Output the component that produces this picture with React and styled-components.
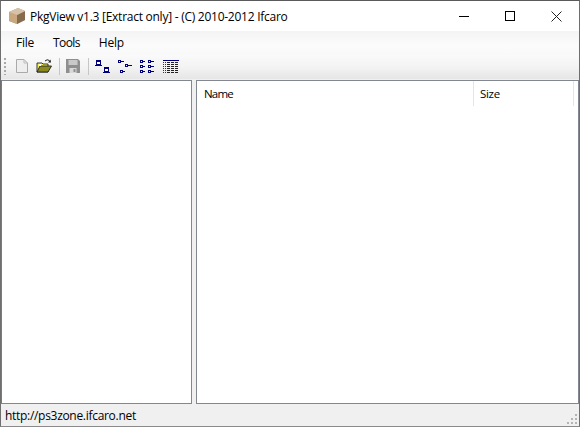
import React from "react";
import styled, { createGlobalStyle } from "styled-components";

const Global = createGlobalStyle`
  html, body { margin: 0; padding: 0; background: #f0f0f0; }
  #root { width: 580px; height: 427px; overflow: hidden; }
`;
const Win = styled.div`
  box-sizing: border-box; width: 580px; height: 427px; display: flex; flex-direction: column;
  border: 1px solid #6f6f6f; border-top-color: #5a5a5a; border-bottom-color: #8a8a8a;
  font-family: "Open Sans", "Noto Sans", sans-serif; font-size: 12px; color: #000; background: #f0f0f0;
`;
const TitleBar = styled.div`
  height: 30px; flex: none; display: flex; align-items: center; background: #fff; padding-left: 8px;
`;
const AppIcon = styled.svg`width: 17px; height: 17px; flex: none; margin-right: 4px;`;
const TitleText = styled.div`font-size: 12px; letter-spacing: -0.0215em; white-space: nowrap; flex: 1;`;
const WinBtn = styled.div`
  width: 46px; height: 30px; display: flex; align-items: center; justify-content: center;
`;
const MenuBar = styled.div`
  height: 24px; flex: none; display: flex; align-items: center; padding: 0 0 2px 15px; box-sizing: border-box; gap: 19px;
  background: linear-gradient(#f4f4f4, #fbfbfb 60%, #f9f9f9);
`;
const MenuItem = styled.div`font-size: 12px; letter-spacing: ${p => p.$track ?? -0.24}px;`;
const ToolBar = styled.div`
  box-sizing: border-box; height: 24px; flex: none; display: flex; align-items: center; padding: 0 0 2px 3px;
  background: linear-gradient(#fafafa, #f3f3f3 50%, #e6e6e6);
`;
const Grip = styled.div`
  width: 2px; height: 17px; margin-right: 8px; flex: none;
  background: repeating-linear-gradient(#a8a8a8 0 2px, transparent 2px 4px);
`;
const Tool = styled.svg`width: 16px; height: 16px; flex: none; margin-right: ${p => p.$gap ?? 7}px;`;
const Sep = styled.div`width: 1px; height: 17px; background: #c6c6c6; flex: none; margin-right: ${p => p.$gap ?? 6}px;`;
const Body = styled.div`
  flex: 1; min-height: 0; display: flex; gap: 4px; background: #f0f0f0; border-top: 1px solid #f0f0f0;
`;
const Tree = styled.div`
  box-sizing: border-box; width: 191px; flex: none; background: #fff; border: 1px solid #828790; border-left-color: #7a7a7a;
`;
const List = styled.div`
  box-sizing: border-box; flex: 1; background: #fff; border: 1px solid #828790;
`;
const Header = styled.div`height: 25px; display: flex; background: #fff;`;
const Col = styled.div`
  box-sizing: border-box; width: ${p => p.$w}px; height: 25px; display: flex; align-items: center; padding-left: ${p => p.$pad}px;
  padding-bottom: 1px; font-size: 11.5px; letter-spacing: ${p => p.$track}px; border-right: 1px solid #e5e5e5;
`;
const Status = styled.div`
  height: 22px; flex: none; display: flex; align-items: center; justify-content: space-between;
  padding-left: 4px; background: #f0f0f0; font-size: 12px; letter-spacing: -0.3px;
`;
const Resize = styled.svg`width: 12px; height: 12px; align-self: flex-end; margin-right: 1px; margin-bottom: 1px;`;

const Blue = "#00007b";
const Doc = ({ x, y }) => (
  <g>
    <rect x={x} y={y} width="5" height="5" fill={Blue} />
    <rect x={x + 1} y={y + 2} width="3" height="2" fill="#fff" />
  </g>
);
const Bit = ({ x, y }) => (
  <g>
    <rect x={x} y={y} width="3" height="3" fill={Blue} />
    <rect x={x + 1} y={y + 1} width="1" height="1" fill="#fff" />
  </g>
);
const Dash = ({ x, y, w = 2 }) => <rect x={x} y={y} width={w} height="1" fill={Blue} />;
const gridRows = [4, 6, 8, 10, 12, 14];

export default function App() {
  return (
    <Win>
      <Global />
      <TitleBar>
        <AppIcon viewBox="0 0 17 17">
          <path d="M0 4 L9 0 L16 3 L16 12 L8 16 L0 13 Z" fill="#b59a78" />
          <path d="M0 4 L8 7 L8 16 L0 13 Z" fill="#c9a87f" />
          <path d="M8 7 L16 3 L16 12 L8 16 Z" fill="#866b4e" />
          <path d="M0 4 L9 0 L16 3 L8 7 Z" fill="#d6c2a8" />
        </AppIcon>
        <TitleText>PkgView v1.3 [Extract only] - (C) 2010-2012 Ifcaro</TitleText>
        <WinBtn>
          <svg width="10" height="10" viewBox="0 0 10 10"><rect y="5" width="10" height="1" fill="#000" /></svg>
        </WinBtn>
        <WinBtn>
          <svg width="10" height="10" viewBox="0 0 10 10"><rect x=".5" y=".5" width="9" height="9" fill="none" stroke="#000" /></svg>
        </WinBtn>
        <WinBtn>
          <svg width="11" height="11" viewBox="0 0 11 11"><path d="M.5 .5 L10.5 10.5 M10.5 .5 L.5 10.5" stroke="#222" fill="none" /></svg>
        </WinBtn>
      </TitleBar>
      <MenuBar>
        <MenuItem>File</MenuItem>
        <MenuItem $track={-0.6}>Tools</MenuItem>
        <MenuItem>Help</MenuItem>
      </MenuBar>
      <ToolBar>
        <Grip />
        <Tool viewBox="0 0 16 16" $gap={6}>
          <path d="M2.5 1.5 H10 L13.5 5 V14.5 H2.5 Z" fill="#eee" stroke="#aaa" />
          <path d="M10 1.5 V5 H13.5" fill="none" stroke="#bbb" />
        </Tool>
        <Tool viewBox="0 0 16 16" $gap={7}>
          <path d="M1 5 H6 L7 6 H12 V14 H1 Z" fill="#f6f05a" stroke="#222" strokeWidth=".9" />
          <path d="M1 14 L4 8 H15.5 L12 14 Z" fill="#8a8a1e" stroke="#222" strokeWidth=".9" />
          <path d="M3 6 h2 v2 h-2 Z" fill="#fff" />
          <path d="M9 3 Q11 0.8 13.5 2.5" fill="none" stroke="#222" />
          <path d="M12 4.5 L15 4.5 L14.5 1.5 Z" fill="#222" />
        </Tool>
        <Sep $gap={5} />
        <Tool viewBox="0 0 16 16" $gap={7}>
          <path d="M1 1 H13 L15 3 V15 H1 Z" fill="#8f8f8f" />
          <rect x="3.5" y="2" width="9" height="5" fill="#c9c9c9" />
          <rect x="4.5" y="10" width="7" height="5" fill="#d8d8d8" />
          <rect x="8.5" y="11" width="2" height="3" fill="#8f8f8f" />
        </Tool>
        <Sep $gap={5} />
        <Tool viewBox="0 0 16 16" $gap={6}>
          <Doc x={2} y={2} /><Dash x={1} y={7} w={7} />
          <Doc x={10} y={9} /><Dash x={9} y={14} w={7} />
        </Tool>
        <Tool viewBox="0 0 16 16" $gap={7}>
          <Bit x={2} y={2} /><Dash x={5} y={3} w={3} />
          <Bit x={9} y={6} /><Dash x={12} y={7} w={4} />
          <Bit x={4} y={12} /><Dash x={7} y={13} w={2} />
        </Tool>
        <Tool viewBox="0 0 16 16" $gap={8}>
          <Bit x={1} y={2} /><Dash x={4} y={3} /><Bit x={9} y={2} /><Dash x={12} y={3} w={3} />
          <Bit x={1} y={7} /><Dash x={4} y={8} /><Bit x={9} y={7} /><Dash x={12} y={8} w={3} />
          <Bit x={1} y={12} /><Dash x={4} y={13} /><Bit x={9} y={12} /><Dash x={12} y={13} w={3} />
        </Tool>
        <Tool viewBox="0 0 16 16" $gap={0}>
          <rect x="0" y="2" width="16" height="1" fill={Blue} />
          {gridRows.map(y => (
            <g key={y}>
              <rect x="0" y={y} width="1" height="1" fill="#333" />
              <rect x="2" y={y} width="1" height="1" fill="#333" />
              <path d={`M4 ${y + 0.5} H16`} stroke="#222" strokeDasharray="3 1" fill="none" />
            </g>
          ))}
        </Tool>
      </ToolBar>
      <Body>
        <Tree />
        <List>
          <Header>
            <Col $w={277} $pad={7} $track={-0.8}>Name</Col>
            <Col $w={100} $pad={6} $track={-0.3}>Size</Col>
          </Header>
        </List>
      </Body>
      <Status>
        <span>http://ps3zone.ifcaro.net</span>
        <Resize viewBox="0 0 12 12">
          <path d="M9 1h2v2H9z M5 5h2v2H5z M9 5h2v2H9z M1 9h2v2H1z M5 9h2v2H5z M9 9h2v2H9z" fill="#b4b4b4" />
        </Resize>
      </Status>
    </Win>
  );
}
